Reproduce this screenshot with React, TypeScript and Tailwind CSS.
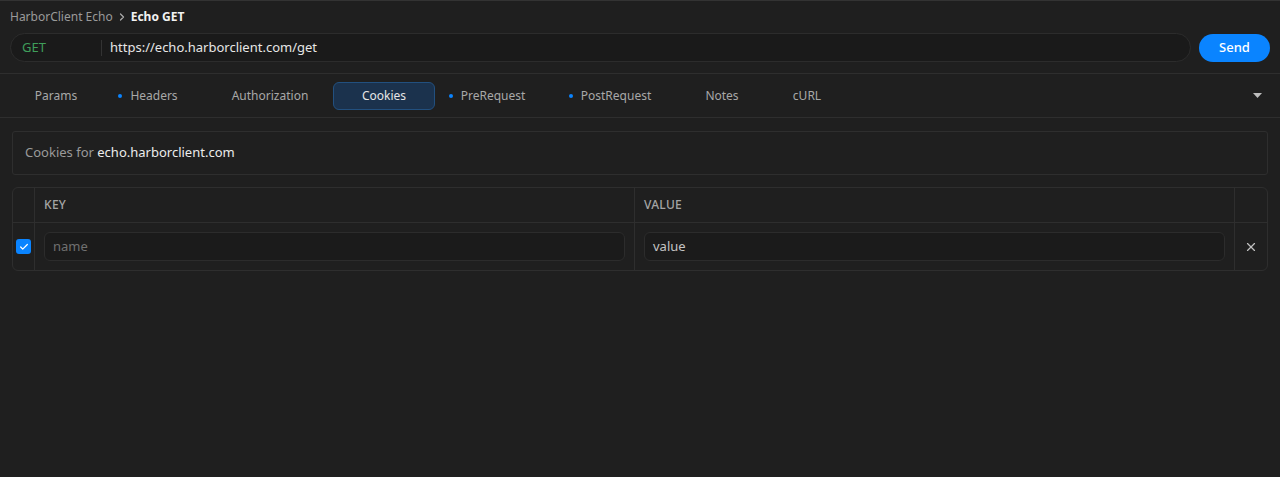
import { Check, ChevronRight, X } from 'lucide-react';

const tabs = [
  { label: 'Params', w: 'w-[92px]', dot: false },
  { label: 'Headers', w: 'w-[92px]', dot: true },
  { label: 'Authorization', w: 'w-[120px] ml-[16px]', dot: false },
  { label: 'Cookies', w: 'w-[102px] ml-[3px]', dot: false, active: true },
  { label: 'PreRequest', w: 'w-[104px]', dot: true },
  { label: 'PostRequest', w: 'w-[142px]', dot: true },
  { label: 'Notes', w: 'w-[82px]', dot: false },
  { label: 'cURL', w: 'w-[88px]', dot: false },
];

export default function App() {
  return (
    <div className="h-[477px] w-full bg-[#1f1f1f] text-[#d4d4d4] border-t border-[#333] font-['Noto_Sans',sans-serif] overflow-hidden">
      {/* breadcrumb + url bar */}
      <div className="px-[10px] pt-[8px] pb-[11px] border-b border-[#2e2e2e]">
        <div className="flex items-center gap-[3px] text-[12px] leading-[16px] mb-[8px]">
          <span className="text-[#9a9a9a]">HarborClient Echo</span>
          <ChevronRight size={12} className="text-[#aaa]" strokeWidth={2.5} />
          <span className="font-bold text-[#f2f2f2]">Echo GET</span>
        </div>
        <div className="flex items-center gap-[8px]">
          <div className="flex-1 h-[29px] flex items-center rounded-full bg-[#1a1a1a] border border-[#2c2c2c]">
            <span className="w-[90px] pl-[11px] text-[13px] text-[#3f9e5a]">GET</span>
            <span className="w-px h-[16px] bg-[#333]" />
            <span className="pl-[8px] text-[13px] text-[#e6e6e6]">https://echo.harborclient.com/get</span>
          </div>
          <button className="w-[71px] h-[28px] rounded-full bg-[#0a84ff] text-white text-[13px] font-medium">
            Send
          </button>
        </div>
      </div>

      {/* tabs */}
      <div className="h-[44px] flex items-center pl-[10px] pr-[16px] border-b border-[#2e2e2e]">
        <div className="flex items-center flex-1">
          {tabs.map((t) => (
            <div
              key={t.label}
              className={`${t.w} h-[28px] flex items-center justify-center gap-[8px] text-[12px] rounded-[6px] ${
                t.active ? 'bg-[#1b324d] border border-[#22507f] text-[#e6e6e6]' : 'text-[#a8a8a8]'
              }`}
            >
              {t.dot && <span className="w-[4px] h-[4px] rounded-full bg-[#0a84ff]" />}
              <span>{t.label}</span>
            </div>
          ))}
        </div>
        <svg width="9" height="6" viewBox="0 0 9 6" className="mr-[2px]">
          <path d="M0 0 H9 L4.5 5 Z" fill="#bdbdbd" />
        </svg>
      </div>

      {/* cookies panel */}
      <div className="px-[12px] pt-[13px]">
        <div className="h-[44px] flex items-center px-[12px] border border-[#2e2e2e] rounded-[3px] text-[13px]">
          <span className="text-[#9a9a9a]">Cookies for&nbsp;</span>
          <span className="text-[#ececec]">echo.harborclient.com</span>
        </div>

        <div className="mt-[12px] border border-[#2e2e2e] rounded-[6px] overflow-hidden">
          <div className="grid grid-cols-[22px_1fr_1fr_32px] h-[35px] border-b border-[#2e2e2e]">
            <div className="border-r border-[#2e2e2e]" />
            <div className="flex items-center px-[9px] text-[12px] font-medium tracking-wide text-[#a5a5a5] border-r border-[#2e2e2e]">KEY</div>
            <div className="flex items-center px-[9px] text-[12px] font-medium tracking-wide text-[#a5a5a5] border-r border-[#2e2e2e]">VALUE</div>
            <div />
          </div>
          <div className="grid grid-cols-[22px_1fr_1fr_32px] h-[47px]">
            <div className="flex items-center justify-center border-r border-[#2e2e2e]">
              <span className="w-[15px] h-[15px] rounded-[3px] bg-[#0a84ff] flex items-center justify-center">
                <Check size={10} strokeWidth={3} className="text-white" />
              </span>
            </div>
            <div className="flex items-center px-[9px] border-r border-[#2e2e2e]">
              <div className="w-full h-[29px] flex items-center px-[8px] rounded-[6px] bg-[#1b1b1b] border border-[#2c2c2c] text-[13px] text-[#707070]">
                name
              </div>
            </div>
            <div className="flex items-center px-[9px] border-r border-[#2e2e2e]">
              <div className="w-full h-[29px] flex items-center px-[8px] rounded-[6px] bg-[#1b1b1b] border border-[#2c2c2c] text-[13px] text-[#c4c4c4]">
                value
              </div>
            </div>
            <div className="flex items-center justify-center">
              <X size={14} strokeWidth={2} className="text-[#c0c0c0]" />
            </div>
          </div>
        </div>
      </div>
    </div>
  );
}
